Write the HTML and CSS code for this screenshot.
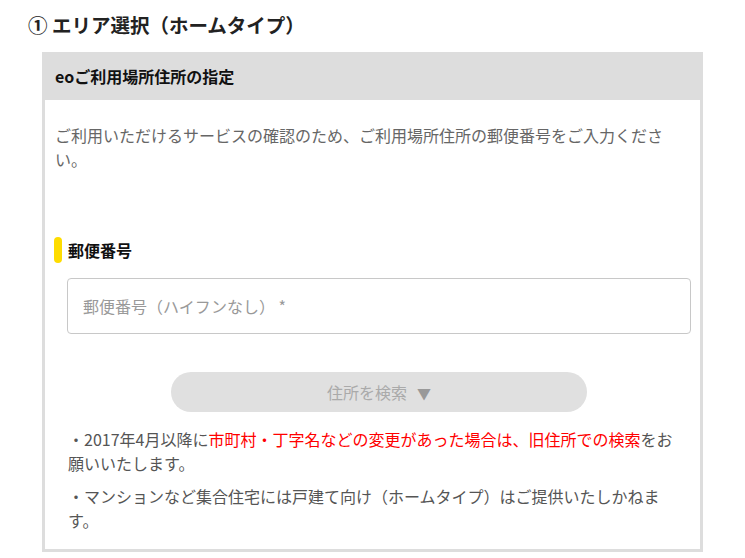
FILE: index.html
```html
<!DOCTYPE html>
<html lang="ja">
<head>
    <meta charset="UTF-8">
    <meta name="viewport" content="width=device-width, initial-scale=1.0">
    <title>エリア選択（ホームタイプ）</title>
    <link rel="stylesheet" href="styles.css">
</head>
<body>

<div class="page">
    <h2 class="step-title">① エリア選択（ホームタイプ）</h2>

    <div class="card">
        <div class="card-header">eoご利用場所住所の指定</div>
        <div class="card-body">
            <p class="lead">ご利用いただけるサービスの確認のため、ご利用場所住所の郵便番号をご入力ください。</p>

            <div class="field-label"><span class="bar"></span>郵便番号</div>

            <div class="field">
                <input type="text" class="zip-input" placeholder="郵便番号（ハイフンなし） *">
                <div class="search-row">
                    <button class="search-btn" disabled>住所を検索<span class="arrow">▼</span></button>
                </div>
                <p class="note">・2017年4月以降に<span class="red">市町村・丁字名などの変更があった場合は、旧住所での検索</span>をお願いいたします。</p>
                <p class="note">・マンションなど集合住宅には戸建て向け（ホームタイプ）はご提供いたしかねます。</p>
            </div>
        </div>
    </div>
</div>

</body>
</html>
```

FILE: styles.css
```css
body {
    margin: 0;
    background-color: #fff;
    font-family: "Noto Sans CJK JP", "Noto Sans", sans-serif;
    color: #333;
}
.page {
    padding: 12px 0 0 28px;
}
.step-title {
    margin: 0;
    font-size: 19.5px;
    line-height: 26px;
    font-weight: bold;
    color: #222;
}
.card {
    width: 655px;
    margin: 14px 0 0 14px;
    border: 3px solid #ddd;
    border-top: none;
}
.card-header {
    background-color: #ddd;
    height: 48px;
    line-height: 48px;
    padding-left: 13px;
    margin: 0 -3px;
    font-size: 16px;
    font-weight: bold;
    color: #111;
}
.card-body {
    padding: 23px 9px 17px 10px;
}
.lead {
    margin: 0;
    font-size: 16px;
    line-height: 24px;
    color: #666;
}
.field-label {
    display: flex;
    align-items: center;
    gap: 6px;
    margin: 66px 0 0 -1px;
    height: 26px;
    font-size: 16px;
    font-weight: bold;
    color: #111;
}
.bar {
    width: 8px;
    height: 26px;
    border-radius: 4px;
    background-color: #fedc00;
}
.field {
    padding-left: 12px;
}
.zip-input {
    display: block;
    box-sizing: border-box;
    width: 100%;
    height: 56px;
    margin-top: 15px;
    padding: 0 15px;
    border: 1px solid #c8c8c8;
    border-radius: 4px;
    font-family: inherit;
    font-size: 16px;
    color: #333;
}
.zip-input::placeholder {
    color: #999;
}
.search-row {
    display: flex;
    justify-content: center;
    margin-top: 38px;
}
.search-btn {
    width: 416px;
    height: 40px;
    border: none;
    border-radius: 20px;
    background-color: #e0e0e0;
    font-family: inherit;
    font-size: 16px;
    color: #aaa;
    cursor: default;
}
.arrow {
    margin-left: 10px;
    font-size: 14px;
    color: #999;
}
.note {
    margin: 15px 14px 0 1px;
    font-size: 16px;
    line-height: 24px;
    color: #555;
}
.note + .note {
    margin-top: 9px;
}
.red {
    color: #ff0000;
}
```
